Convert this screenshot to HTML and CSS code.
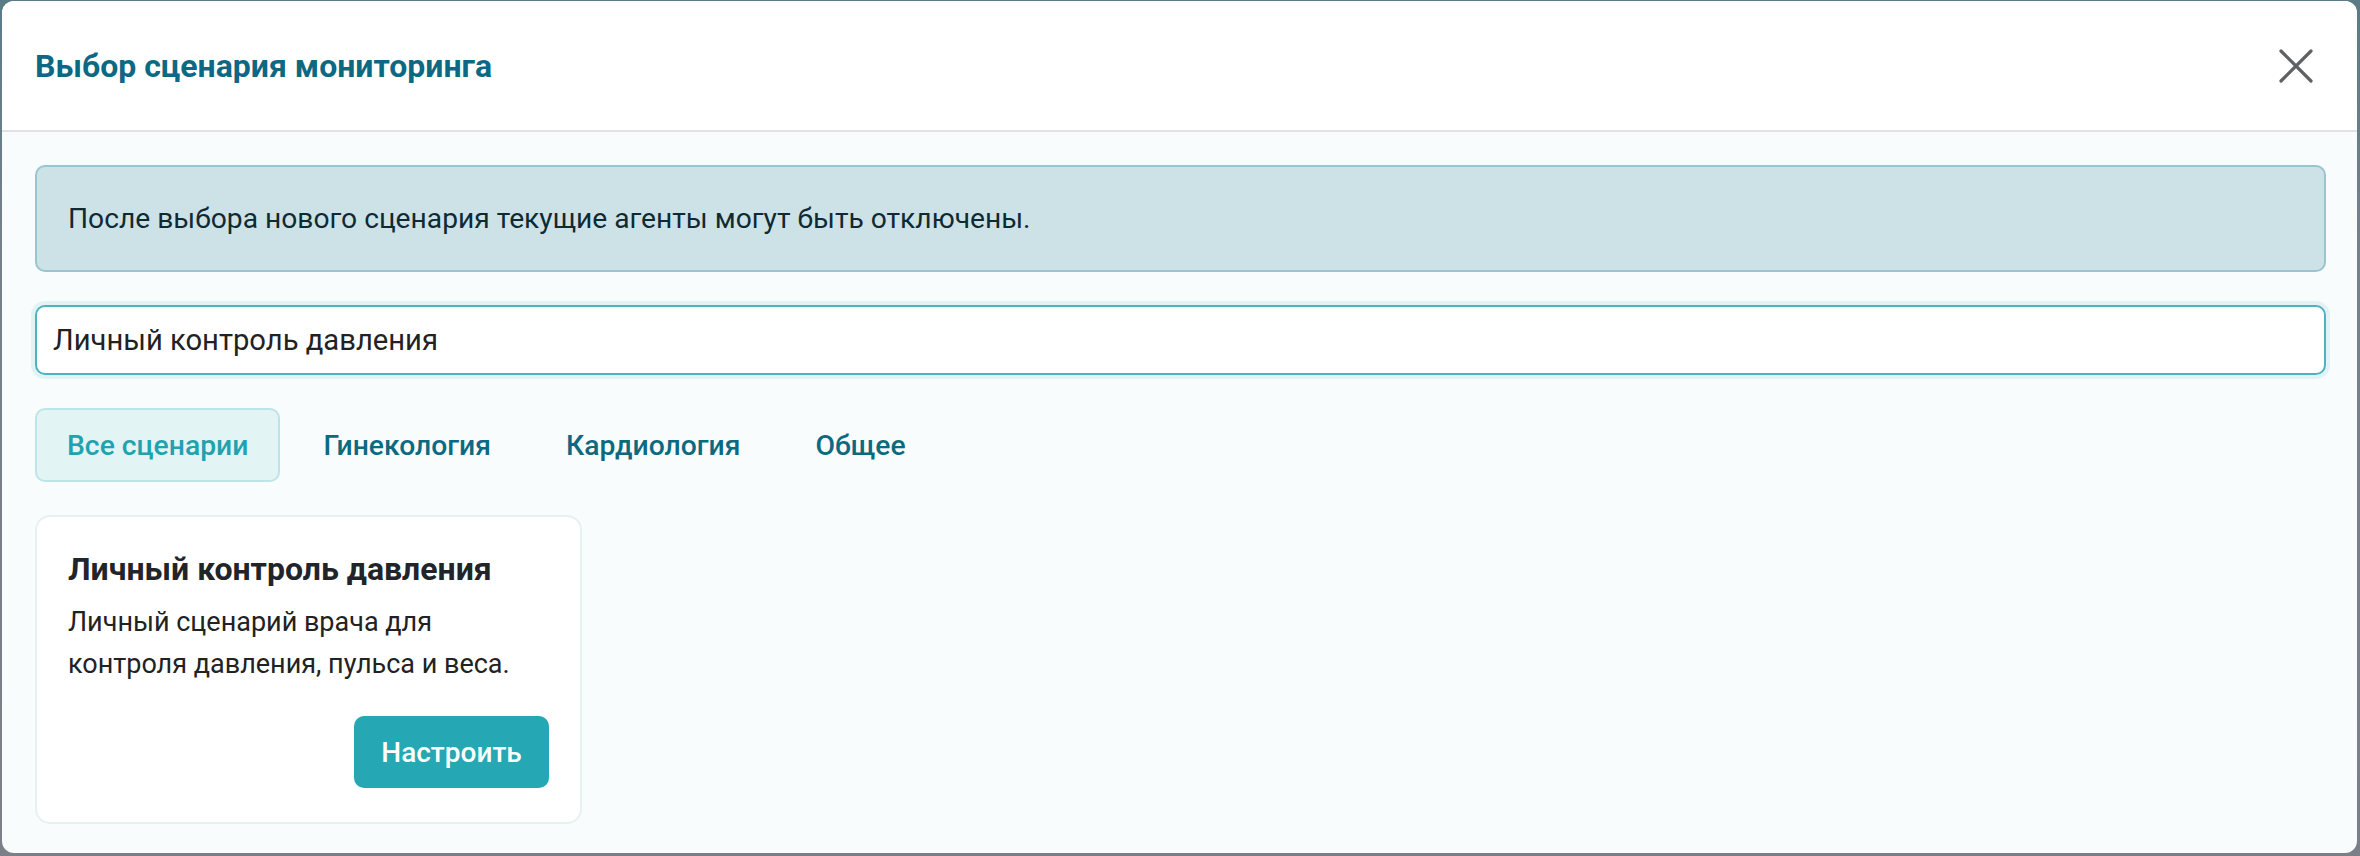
FILE: index.html
```html
<!DOCTYPE html>
<html lang="ru">
<head>
  <meta charset="UTF-8" />
  <meta name="viewport" content="width=device-width, initial-scale=1.0"/>
  <title>Выбор сценария мониторинга</title>
  <link rel="stylesheet" href="styles.css">
</head>
<body>

  <div class="modal">
    <header class="modal-header">
      <h2 class="modal-title">Выбор сценария мониторинга</h2>
      <button class="close-btn" aria-label="Закрыть">
        <svg viewBox="0 0 34 34" width="34" height="34">
          <path d="M2 2 L32 32 M32 2 L2 32" stroke="#5f6163" stroke-width="3.2" stroke-linecap="round" fill="none"/>
        </svg>
      </button>
    </header>

    <div class="modal-body">
      <div class="alert">После выбора нового сценария текущие агенты могут быть отключены.</div>

      <input class="search" type="text" value="Личный контроль давления" />

      <div class="tabs">
        <button class="tab active">Все сценарии</button>
        <button class="tab">Гинекология</button>
        <button class="tab">Кардиология</button>
        <button class="tab">Общее</button>
      </div>

      <div class="cards">
        <div class="card">
          <h3>Личный контроль давления</h3>
          <p>Личный сценарий врача для контроля давления, пульса и веса.</p>
          <div class="card-actions">
            <button class="btn">Настроить</button>
          </div>
        </div>
      </div>
    </div>
  </div>

</body>
</html>
```

FILE: styles.css
```css
* {
  margin: 0;
  padding: 0;
  box-sizing: border-box;
}

html, body {
  height: 100%;
}

body {
  font-family: Roboto, 'Noto Sans', sans-serif;
  background: linear-gradient(180deg, #5b7b87 0%, #77808a 30%, #7b7f88 100%);
  padding: 1px 3px 3px 2px;
}

/* Modal window */
.modal {
  height: 100%;
  background: #f9fcfc;
  border-radius: 12px;
  overflow: hidden;
  display: flex;
  flex-direction: column;
}

.modal-header {
  height: 131px;
  flex-shrink: 0;
  background: #fff;
  border-bottom: 2px solid #dfe3e7;
  display: flex;
  align-items: center;
  justify-content: space-between;
  padding: 0 44px 0 33px;
}

.modal-title {
  font-size: 32px;
  font-weight: 700;
  color: #0d6983;
}

.close-btn {
  background: none;
  border: none;
  cursor: pointer;
  display: flex;
}

.modal-body {
  flex: 1;
  padding: 33px 31px 33px 33px;
  display: flex;
  flex-direction: column;
  gap: 33px;
}

/* Warning box */
.alert {
  background: #cde2e7;
  border: 2px solid #98c5d0;
  border-radius: 10px;
  padding: 31px 31px;
  font-size: 28.2px;
  line-height: 41px;
  color: #0f2a33;
}

.search {
  height: 70px;
  width: 100%;
  border: 2px solid #4bb4bf;
  border-radius: 10px;
  box-shadow: 0 0 0 4px #e3f3f5;
  background: #fff;
  padding: 0 16px;
  font-family: inherit;
  font-size: 29.2px;
  color: #222;
  outline: none;
}

/* Category tabs */
.tabs {
  display: flex;
  gap: 11px;
}

.tab {
  height: 74px;
  padding: 0 30px 0 30px;
  border: 2px solid transparent;
  border-radius: 10px;
  background: transparent;
  font-family: inherit;
  font-size: 28.3px;
  font-weight: 500;
  color: #0c6a80;
  cursor: pointer;
}

.tab.active {
  background: #e3f4f5;
  border-color: #bde4e9;
  color: #22a1ae;
}

/* Scenario cards */
.cards {
  display: flex;
  gap: 33px;
}

.card {
  width: 547px;
  background: #fff;
  border: 2px solid #e7f0f3;
  border-radius: 15px;
  padding: 30px 31px 34px 31px;
}

.card h3 {
  font-size: 32px;
  font-weight: 700;
  color: #212529;
  line-height: 44px;
  margin-bottom: 10px;
}

.card p {
  font-size: 27px;
  line-height: 42px;
  color: #222;
}

.card-actions {
  display: flex;
  justify-content: flex-end;
  margin-top: 31px;
}

.btn {
  width: 195px;
  height: 72px;
  background: #25a8b4;
  color: #fff;
  border: none;
  border-radius: 10px;
  font-family: inherit;
  font-size: 28px;
  font-weight: 500;
  cursor: pointer;
}
```
